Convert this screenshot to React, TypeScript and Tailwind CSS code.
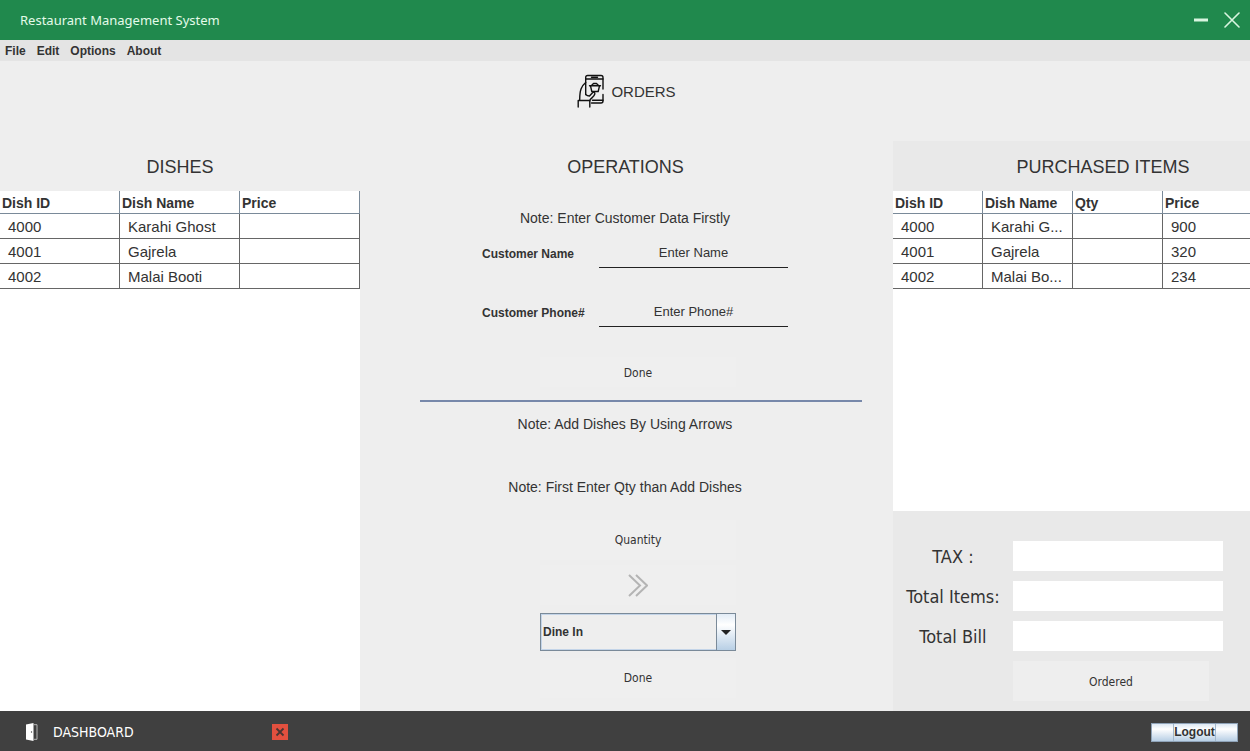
import React from "react";

const TAHOMA = "font-['DejaVu_Sans_Condensed','Noto_Sans',sans-serif]";

type DataTableProps = {
  label: string;
  columns: string[];
  widths: string[];
  rows: string[][];
  openEnd?: boolean;
};

function DataTable({ label, columns, widths, rows, openEnd }: DataTableProps) {
  const edge = (i: number) =>
    openEnd && i === columns.length - 1 ? "" : "border-r";
  return (
    <table
      aria-label={label}
      className="w-full table-fixed border-separate border-spacing-0 text-[15px] text-[#333333]"
    >
      <colgroup>
        {widths.map((w, i) => (
          <col key={i} className={w} />
        ))}
      </colgroup>
      <thead>
        <tr>
          {columns.map((c, i) => (
            <th
              key={c}
              scope="col"
              className={`h-[23px] border-b border-[#7a8a99] bg-white p-0 pt-[2px] pl-[2px] text-left align-middle text-sm leading-5 font-bold ${edge(i)}`}
            >
              {c}
            </th>
          ))}
        </tr>
      </thead>
      <tbody>
        {rows.map((r) => (
          <tr key={r[0]}>
            {r.map((v, i) => (
              <td
                key={i}
                className={`h-[25px] overflow-hidden border-b border-[#666666] bg-white p-0 pt-[2px] pl-2 align-middle leading-[22px] whitespace-nowrap ${edge(i)}`}
              >
                {v}
              </td>
            ))}
          </tr>
        ))}
      </tbody>
    </table>
  );
}

function OrdersIcon() {
  return (
    <svg
      viewBox="0 0 28 34"
      className="h-[34px] w-7"
      fill="none"
      stroke="#111111"
      strokeWidth="1.4"
      strokeLinecap="round"
      strokeLinejoin="round"
      aria-hidden="true"
    >
      <path d="M8.700 20.500V3.500Q8.700 1.500 10.700 1.500H24Q26 1.500 26 3.500V15" />
      <path d="M26 20.500v6.500q0 2-2 2H14.500" />
      <path d="M8.700 5H26M14.500 3.200h6M15.500 26.300H26" />
      <path d="M13.500 11.800l1.300 5.700h6.400l1.300-5.700zM12.500 11.800h11M14.500 11.500l2-2M21.500 11.500l-2-2M16.500 9.500h3" />
      <path d="M8.700 8.500C4.500 12 2.700 16 2.700 25.500M1.200 33v-6.500h11.600V33" />
      <path d="M12.800 26.500c.700-2.500 4-3 5-6.500 .5-1.800-1.300-2.400-2.300-1.200l-3 3.200c-1.500 0-2.800-.500-3.800-1.500" />
    </svg>
  );
}

function TitleBar() {
  return (
    <header className="flex h-10 items-center justify-between bg-[#20894d] pr-[10px] pl-5">
      <h1 className="pt-px font-['Noto_Sans',sans-serif] text-[13px] text-[#e4fbe9]">
        Restaurant Management System
      </h1>
      <div className="flex items-center gap-4">
        <button type="button" aria-label="Minimize" className="block">
          <svg viewBox="0 0 14 16" className="h-4 w-[14px]" aria-hidden="true">
            <path d="M0 8h14" stroke="#d9f5e0" strokeWidth="3" />
          </svg>
        </button>
        <button type="button" aria-label="Close" className="block">
          <svg viewBox="0 0 16 16" className="size-4" aria-hidden="true">
            <path
              d="M1 1l14 14M15 1L1 15"
              stroke="#d9f5e0"
              strokeWidth="1.6"
              strokeLinecap="round"
            />
          </svg>
        </button>
      </div>
    </header>
  );
}

function MenuBar() {
  return (
    <nav className="flex h-[21px] items-center gap-[11px] bg-[#e4e4e4] pl-[5px] text-xs font-bold text-[#333333]">
      {["File", "Edit", "Options", "About"].map((m) => (
        <button key={m} type="button">
          {m}
        </button>
      ))}
    </nav>
  );
}

function Field({
  id,
  label,
  value,
}: {
  id: string;
  label: string;
  value: string;
}) {
  return (
    <div className="flex h-[29px] w-[306px] items-center">
      <label htmlFor={id} className="w-[117px] shrink-0 text-xs font-bold">
        {label}
      </label>
      <input
        id={id}
        defaultValue={value}
        className="h-full w-[189px] border-b border-[#222222] bg-transparent pb-[2px] text-center text-[13px] outline-none"
      />
    </div>
  );
}

function Note({ children }: { children: React.ReactNode }) {
  return (
    <p className="h-7 pr-[3px] text-center text-sm leading-7">{children}</p>
  );
}

function Operations() {
  const button = `w-[196px] bg-[#efefef] text-xs ${TAHOMA}`;
  return (
    <section className="min-w-0 flex-1">
      <h2 className="h-[50px] pr-[2px] text-center text-lg leading-[52px]">
        OPERATIONS
      </h2>
      <div className="pt-[13px]">
        <Note>Note: Enter Customer Data Firstly</Note>
      </div>
      <div className="flex flex-col items-center gap-[30px] pt-[7px] pl-[17px]">
        <Field id="name" label="Customer Name" value="Enter Name" />
        <Field id="phone" label="Customer Phone#" value="Enter Phone#" />
      </div>
      <div className="flex justify-center pt-[30px] pl-[23px]">
        <button type="button" className={`h-[30px] pt-px ${button}`}>
          Done
        </button>
      </div>
      <hr className="mt-[13px] mr-[31px] ml-[60px] border-t-2 border-[#7788aa]" />
      <div className="flex flex-col gap-[35px] pt-2">
        <Note>Note: Add Dishes By Using Arrows</Note>
        <Note>Note: First Enter Qty than Add Dishes</Note>
      </div>
      <div className="flex flex-col items-center pt-[19px] pl-[23px]">
        <input
          aria-label="Quantity"
          defaultValue="Quantity"
          className={`h-10 text-center outline-none ${button}`}
        />
        <button
          type="button"
          aria-label="Add dish"
          className={`mt-[5px] flex h-10 items-center justify-center ${button}`}
        >
          <svg
            viewBox="0 0 20 24"
            className="h-6 w-5"
            fill="none"
            stroke="#b4b4b4"
            strokeWidth="2"
            aria-hidden="true"
          >
            <path d="M1 2L12 12.500L1 23M8 2L19 12.500L8 23" />
          </svg>
        </button>
        <div className="relative mt-2 h-[38px] w-[196px]">
          <select
            aria-label="Order type"
            className="size-full appearance-none border border-[#7a8a99] bg-[#eeeeee] pl-[2px] text-xs font-bold outline-1 -outline-offset-2 outline-[#c3d4e8]"
          >
            <option>Dine In</option>
            <option>Take Away</option>
          </select>
          <span className="pointer-events-none absolute inset-y-0 right-0 flex w-5 items-center justify-center border border-[#7a8a99] bg-linear-to-b from-[#e2ecf6] via-white via-30% to-[#b8cfe5]">
            <svg viewBox="0 0 10 5" className="h-[5px] w-[10px]" aria-hidden="true">
              <path d="M0 0h10L5 5z" fill="#222222" />
            </svg>
          </span>
        </div>
        <button type="button" className={`mt-[7px] h-10 ${button}`}>
          Done
        </button>
      </div>
    </section>
  );
}

function Purchased() {
  return (
    <section className="flex w-[357px] shrink-0 flex-col bg-[#e9e9e9]">
      <h2 className="h-[50px] pl-[63px] text-center text-lg leading-[52px]">
        PURCHASED ITEMS
      </h2>
      <div className="min-h-80 flex-1 bg-white">
        <DataTable
          label="Purchased items"
          columns={["Dish ID", "Dish Name", "Qty", "Price"]}
          widths={["w-[90px]", "w-[90px]", "w-[90px]", "w-auto"]}
          rows={[
            ["4000", "Karahi G...", "", "900"],
            ["4001", "Gajrela", "", "320"],
            ["4002", "Malai Bo...", "", "234"],
          ]}
          openEnd
        />
      </div>
      <div
        className={`grid grid-cols-[120px_210px] gap-y-[10px] pt-[30px] pb-[10px] text-lg ${TAHOMA}`}
      >
        {["TAX :", "Total Items:", "Total Bill"].map((t) => (
          <React.Fragment key={t}>
            <label htmlFor={t} className="h-[30px] text-center leading-8">
              {t}
            </label>
            <input id={t} className="h-[30px] w-full bg-white px-2 text-sm" />
          </React.Fragment>
        ))}
        <button
          type="button"
          className="col-start-2 h-10 w-[196px] bg-[#eeeeee] pt-px text-xs"
        >
          Ordered
        </button>
      </div>
    </section>
  );
}

function Footer() {
  return (
    <footer className="flex h-10 items-center bg-[#404040] pt-[2px] pr-3 pl-[26px]">
      <svg viewBox="0 0 12 18" className="h-[18px] w-3" aria-hidden="true">
        <path d="M0 1.500L7.500 0v18L0 16.500z" fill="#ffffff" />
        <path d="M7.500 1.700h3.500v14.600h-3.500" fill="none" stroke="#b5b5b5" />
        <circle cx="5.500" cy="9" r="0.700" fill="#404040" />
      </svg>
      <a
        href="#dashboard"
        className={`ml-[15px] w-[219px] text-sm text-white ${TAHOMA}`}
      >
        DASHBOARD
      </a>
      <button
        type="button"
        aria-label="Close dashboard"
        className="size-4 bg-[#e2503f]"
      >
        <svg viewBox="0 0 16 16" className="size-4" aria-hidden="true">
          <path
            d="M4.500 4.500l7 7M11.500 4.500l-7 7"
            stroke="#4a3533"
            strokeWidth="1.800"
          />
        </svg>
      </button>
      <button
        type="button"
        className="ml-auto flex h-[19px] w-[87px] items-center justify-center border border-[#8fa3b8] bg-linear-to-b from-[#dde8f3] via-white via-30% to-[#b8cfe5] text-xs font-bold text-[#333333]"
      >
        <span className="border-x border-[#a3b8cc] leading-[17px]">Logout</span>
      </button>
    </footer>
  );
}

export default function App() {
  return (
    <div className="flex min-h-screen flex-col bg-[#eeeeee] font-['Liberation_Sans',Arial,sans-serif] text-[#333333]">
      <TitleBar />
      <MenuBar />
      <div className="flex h-20 items-start justify-center gap-[6px] pt-[13px] pl-[3px]">
        <OrdersIcon />
        <span className="text-[15px] leading-9">ORDERS</span>
      </div>
      <main className="flex flex-1">
        <section className="flex w-[360px] shrink-0 flex-col">
          <h2 className="h-[50px] text-center text-lg leading-[52px]">
            DISHES
          </h2>
          <div className="flex-1 bg-white">
            <DataTable
              label="Dishes"
              columns={["Dish ID", "Dish Name", "Price"]}
              widths={["w-[120px]", "w-[120px]", "w-[120px]"]}
              rows={[
                ["4000", "Karahi Ghost", ""],
                ["4001", "Gajrela", ""],
                ["4002", "Malai Booti", ""],
              ]}
            />
          </div>
        </section>
        <Operations />
        <Purchased />
      </main>
      <Footer />
    </div>
  );
}
